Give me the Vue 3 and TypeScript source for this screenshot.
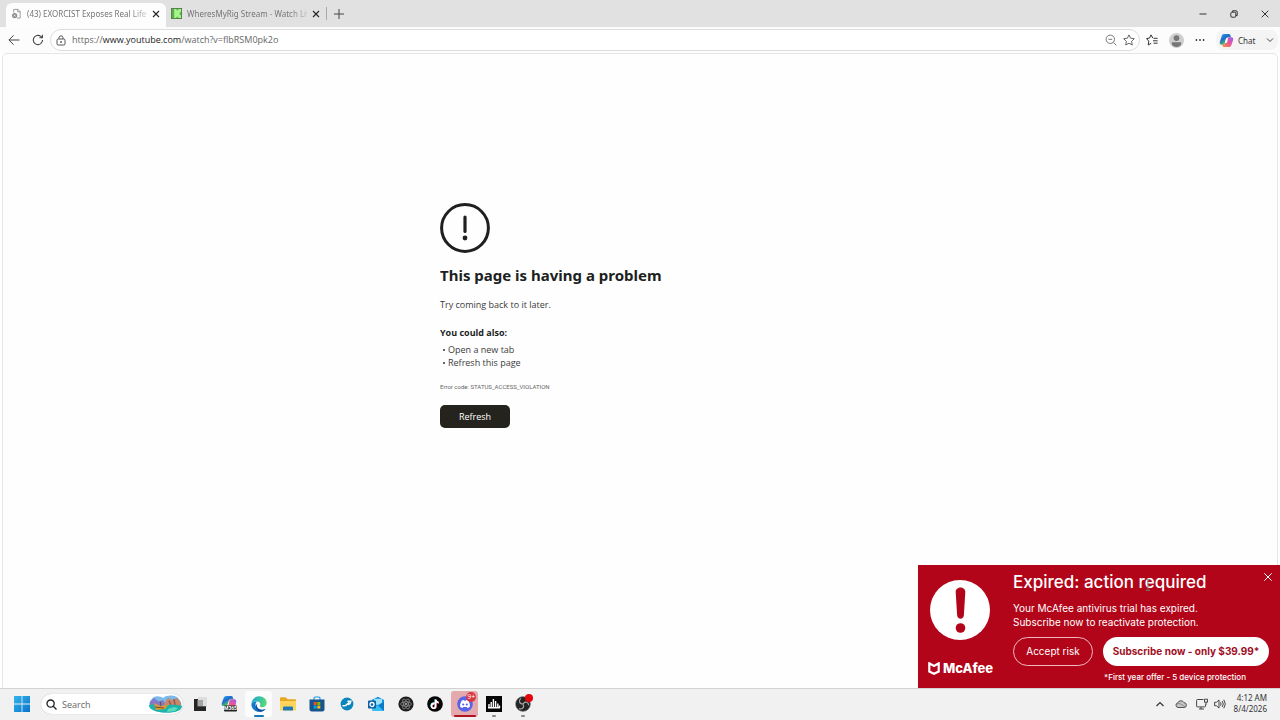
<script setup lang="ts">
import { ref } from 'vue'

interface Tab { title: string; kind: 'page' | 'kick'; active: boolean }

const tabs: Tab[] = [
  { title: '(43) EXORCIST Exposes Real Life D', kind: 'page', active: true },
  { title: 'WheresMyRig Stream - Watch Live', kind: 'kick', active: false },
]
const query = ref('')
const suggestions = ['Open a new tab', 'Refresh this page']
</script>

<template>
  <div class="desktop">
    <header class="tabstrip">
      <div v-for="t in tabs" :key="t.title" class="tab" :class="{ active: t.active }">
        <svg v-if="t.kind === 'page'" class="fav" viewBox="0 0 12 12">
          <path d="M3 5V1.5h4.5L10 4v7H6.5M7.3 1.5V4.2H10" fill="#fff" stroke="#8a8a8a" stroke-width=".9" />
          <circle cx="4" cy="8.3" r="2.9" fill="#8d8d8d" />
          <path d="M3 7.3l2 2m0-2l-2 2" stroke="#fff" stroke-width=".8" />
        </svg>
        <svg v-else class="fav" viewBox="0 0 12 12">
          <rect x=".5" y=".5" width="11" height="11" fill="#a5f58c" stroke="#4b7d42" />
          <path d="M1 1h2.500v10H1zM6 1h2v1.500H6zM9.500 4.500H11v3H9.500zM6 9.500h2V11H6z" fill="#5cae4c" />
        </svg>
        <span class="title">{{ t.title }}</span>
        <button class="plain close" aria-label="Close tab">
          <svg viewBox="0 0 8 8"><path d="M1 1l6 6M7 1L1 7" stroke="#222" stroke-width="1.1" /></svg>
        </button>
      </div>
      <span class="divider"></span>
      <button class="plain newtab" aria-label="New tab">
        <svg viewBox="0 0 10 10"><path d="M5 0v10M0 5h10" stroke="#444" /></svg>
      </button>
      <div class="wincontrols">
        <button class="plain" aria-label="Minimize"><svg viewBox="0 0 8 8"><path d="M.5 4h7" stroke="#333" /></svg></button>
        <button class="plain" aria-label="Restore">
          <svg viewBox="0 0 8 8" fill="none" stroke="#333"><rect x=".8" y="2.2" width="5" height="5" rx="1" /><path d="M2.6 2V.8H6a1.2 1.2 0 0 1 1.2 1.2v3.500H6" /></svg>
        </button>
        <button class="plain" aria-label="Close"><svg viewBox="0 0 8 8"><path d="M.7.7l6.6 6.6M7.3.7L.7 7.3" stroke="#333" /></svg></button>
      </div>
    </header>

    <div class="toolbar">
      <button class="plain nav" aria-label="Back">
        <svg viewBox="0 0 12 12" fill="none" stroke="#444"><path d="M11.5 6H1M5.6 1.3L.9 6l4.7 4.7" /></svg>
      </button>
      <button class="plain nav" aria-label="Reload">
        <svg viewBox="0 0 12 12" fill="none" stroke="#444" stroke-width="1.1"><path d="M10.5 6A4.6 4.6 0 1 1 8.8 2.4L10.3 3.7M10.4.8v3H7.4" /></svg>
      </button>
      <div class="address">
        <svg class="lock" viewBox="0 0 10 11" fill="none" stroke="#555"><rect x="1" y="4" width="8" height="6" rx="1.2" /><path d="M3 4V2.8a2 2 0 0 1 4 0V4" /><circle cx="5" cy="7" r=".5" fill="#555" /></svg>
        <a class="url" href="#">https://<b>www.youtube.com</b>/watch?v=flbRSM0pk2o</a>
        <button class="plain" aria-label="Zoom out">
          <svg viewBox="0 0 12 12" fill="none" stroke="#777"><circle cx="5.3" cy="5.3" r="4.2" /><path d="M3.4 5.3h3.8M8.4 8.4l3 3" /></svg>
        </button>
        <button class="plain" aria-label="Add to favorites">
          <svg viewBox="0 0 12 12" fill="none" stroke="#555" stroke-width=".9" stroke-linejoin="round"><path d="M6 .9l1.6 3.3 3.7.5-2.7 2.6.7 3.7L6 9.2 2.7 11l.7-3.7L.7 4.7l3.7-.5z" /></svg>
        </button>
      </div>
      <button class="plain tool" aria-label="Favorites">
        <svg viewBox="0 0 12 12" fill="none" stroke="#333" stroke-linejoin="round"><path d="M6.8 4.1L5 .9 3.5 4.1.6 4.6l2.2 2.6-.6 3.8 3-1.7M7.6 4.3h4M7 6.8h4.6M7.6 9.2h4" /></svg>
      </button>
      <button class="plain tool avatar" aria-label="Profile">
        <svg viewBox="0 0 15 15"><circle cx="7.5" cy="7.5" r="7.5" fill="#cfcfcf" /><circle cx="7.5" cy="5.1" r="2.9" fill="#777" /><path d="M2.8 9.2h9.4v1.2a4.7 3.6 0 0 1-9.4 0z" fill="#777" /></svg>
      </button>
      <button class="plain tool" aria-label="Settings and more">
        <svg viewBox="0 0 12 12" fill="#333"><circle cx="2.4" cy="6" r=".9" /><circle cx="6" cy="6" r=".9" /><circle cx="9.6" cy="6" r=".9" /></svg>
      </button>
      <button class="chat">
        <svg class="copilot" viewBox="0 0 16 16">
          <path d="M5.6 1h4.8c1.2 0 1.6.8 2 2l.4 1.4H9.6c-1 0-1.5.6-1.8 1.6L6.2 11c-.4 1.2-1 1.6-2 1.6H2.8C.8 12.6.6 11 1 9.4L2.9 3C3.3 1.7 4.2 1 5.6 1z" fill="url(#cpA)" />
          <path d="M10.4 15H5.6c-1.2 0-1.6-.8-2-2l-.3-.7h1c1.4 0 2.2-.6 2.7-2l1.5-4.9c.3-.8.8-1 1.5-1h3.2c2 0 2.2 1.6 1.8 3.2L13.1 13c-.4 1.3-1.3 2-2.7 2z" fill="url(#cpB)" />
          <path d="M7.5 5.600h2.200L8.500 10.300H6.300z" fill="#fff" />
        </svg>
        <span>Chat</span>
        <svg class="chev" viewBox="0 0 8 8" fill="none" stroke="#444"><path d="M1 2.500l3 3 3-3" /></svg>
      </button>
    </div>

    <main class="viewport">
      <section class="problem">
        <svg class="alert" viewBox="0 0 50 50"><circle cx="25" cy="25" r="23.400" fill="none" stroke="#201f1e" stroke-width="3" /><path d="M25 14v14.500" stroke="#201f1e" stroke-width="3.200" stroke-linecap="round" /><circle cx="25" cy="35" r="2.400" fill="#201f1e" /></svg>
        <h1>This page is having a problem</h1>
        <p class="lead">Try coming back to it later.</p>
        <h2>You could also:</h2>
        <ul><li v-for="s in suggestions" :key="s">{{ s }}</li></ul>
        <p class="code">Error code: STATUS_ACCESS_VIOLATION</p>
        <button class="refresh">Refresh</button>
      </section>

      <aside class="toast">
        <div class="brand">
          <svg class="bang" viewBox="0 0 60 60"><circle cx="30" cy="30" r="30" fill="#fff" /><path d="M25.700 12c0-6 9.600-6 9.600 0l-1.400 23c-.3 5-6.500 5-6.800 0z" fill="#b20519" /><circle cx="30.500" cy="48" r="4.800" fill="#b20519" /></svg>
          <div class="logo">
            <svg viewBox="0 0 12 13"><path d="M1.300 1.300v8.200L6 11.700l4.700-2.200V1.300L6 3.900z" fill="none" stroke="#fff" stroke-width="2.200" /></svg>
            <span>McAfee</span>
          </div>
        </div>
        <div class="message">
          <h3>Expired: action required</h3>
          <p>Your McAfee antivirus trial has expired.<br />Subscribe now to reactivate protection.</p>
          <div class="actions">
            <button class="risk">Accept risk</button>
            <button class="buy">Subscribe now - only $39.99*</button>
          </div>
          <small>*First year offer - 5 device protection</small>
        </div>
        <button class="plain dismiss" aria-label="Dismiss"><svg viewBox="0 0 8 8"><path d="M.3.3l7.400 7.400M7.700.3L.3 7.700" stroke="#fff" /></svg></button>
        <svg class="cursor" viewBox="0 0 6 12" fill="none" stroke="#777"><path d="M1 .5h1.500L3 1l.5-.5H5M3 1v10M1 11.500h1.500L3 11l.5.5H5" /></svg>
      </aside>
    </main>

    <footer class="taskbar">
      <button class="plain start" aria-label="Start">
        <svg viewBox="0 0 16 16" fill="url(#win)"><path d="M0 0h7.600v7.600H0zM8.400 0H16v7.600H8.400zM0 8.400h7.600V16H0zM8.400 8.400H16V16H8.400z" /></svg>
      </button>
      <label class="search">
        <svg class="glass" viewBox="0 0 11 11" fill="none" stroke="#222" stroke-width="1.300"><circle cx="4.600" cy="4.600" r="3.600" /><path d="M7.300 7.300l3.200 3.200" /></svg>
        <input v-model="query" type="text" placeholder="Search" aria-label="Search" />
        <svg class="scene" viewBox="0 0 33 18">
          <path d="M2 5C5 0 11 1 14 3c4-4 14-3 16 1 4 5 3 10-2 12-8 3-18 2-24-1C-1 12 0 7 2 5z" fill="#7cb8e8" />
          <path d="M1 7l4-4 5 4 4-2 3 5-8 2-8-1z" fill="#8178c9" />
          <path d="M15 9l4-6 4 2 5-2 4 5v5H15z" fill="#c98767" />
          <path d="M20 6l2 4m3-6l1 6" stroke="#8d5a62" stroke-width="1.500" />
          <path d="M0 10c6-2 9 2 14 1s12-2 19 0c0 3-3 5-7 6-8 1-16 1-22-2-3-1-4-3-4-5z" fill="#1cb5a8" />
          <path d="M5 8l6 3 8-1-3 4-9 1z" fill="#e39a35" /><path d="M11 6l1 5M6 12l9 1" stroke="#74482c" />
          <path d="M19 14l6-2 4 1-3 3-8 1z" fill="#59d9bd" />
        </svg>
      </label>
      <nav class="apps">
        <button class="plain" aria-label="Task view"><svg viewBox="0 0 16 16"><path d="M6 1h9v10H6z" fill="#dedede" /><path d="M2 3h4v8h8v4H2z" fill="#252525" /><path d="M5.500 4H11v6H5.500z" fill="#a5a5a5" /><path d="M5.500 10H14v1H5.500z" fill="#555" /></svg></button>
        <button class="plain" aria-label="Microsoft 365"><svg viewBox="0 0 16 16"><path d="M5.300 0h5c1.200 0 1.600 1 2 2.400l.3.900H9.600C8.500 3.300 8 4 7.700 5L6 10H2.500C.5 10 .4 8.600.8 7.300L2.600 2C3.100.7 4 0 5.300 0z" fill="url(#cpA)" /><path d="M7 11l1.600-6.400c.4-1 .8-1.300 1.600-1.300h2.900c2 0 2.400 1.500 2 3L14 12H7z" fill="url(#cpB)" /><rect x="3" y="9.500" width="13" height="6" rx="1" fill="#222" /><text x="9.500" y="14.300" text-anchor="middle" class="tiny">M365</text></svg></button>
        <button class="plain current" aria-label="Microsoft Edge"><svg viewBox="0 0 16 16"><path d="M.4 8.200C1 6.500 3.500 5.300 6.200 5.600c-2 1-2.500 4.600.4 7 2.500 2 5.700 1.500 8 .3C12.800 15 10.500 15.800 8 15.800 3.600 15.800.2 12 .4 8.200z" fill="#1577c9" /><path d="M6.300 7.500c-1 2-.2 4.300 1.700 5.500 2.300 1.300 4.900.8 6.500 0-1.500 2-4 3-6 2.600-3.300-.6-4.800-5.600-2.200-8.100z" fill="#0c4f9f" /><path d="M.4 8.500C.5 3.500 4 .3 8 .3c4.600 0 7.700 3 7.700 6.700 0 2.600-2 4.200-4.400 4.200-1.900 0-2.900-.9-2.300-1.700.8-1.200.3-3.800-3-4C3.500 5.400 1.200 6.700.4 8.500z" fill="url(#edge)" /></svg><i class="run blue"></i></button>
        <button class="plain" aria-label="File Explorer"><svg viewBox="0 0 16 16"><path d="M0 2.200Q0 1.200 1 1.200h4.600l2 2H15q1 0 1 1V14H0z" fill="#e5a823" /><path d="M0 5h16v8.500q0 1-1 1H1q-1 0-1-1z" fill="#ffd45c" /><path d="M3 14.500v-3q0-1 1-1h8q1 0 1 1v3z" fill="#1c78bd" /></svg></button>
        <button class="plain" aria-label="Microsoft Store"><svg viewBox="0 0 16 16"><path d="M5 4V2.300Q5 1 6.300 1h3.400Q11 1 11 2.300V4" fill="none" stroke="#1b9de2" stroke-width="1.200" /><path d="M.5 3.500h15V13q0 2.500-2.500 2.500H3Q.5 15.500.5 13z" fill="#17548d" /><path d="M4.700 6h3v3h-3z" fill="#f25022" /><path d="M8.300 6h3v3h-3z" fill="#7fba00" /><path d="M4.700 9.600h3v3h-3z" fill="#00a4ef" /><path d="M8.300 9.600h3v3h-3z" fill="#ffb900" /></svg></button>
        <button class="plain" aria-label="Support"><svg viewBox="0 0 16 16"><circle cx="8" cy="8" r="6.400" fill="#0b86bd" /><path d="M4.200 9.800l2.400-.3 3.200-2.600M9 5.200h2.800L11 7.500l-1.500.8" fill="none" stroke="#fff" stroke-width="1.600" stroke-linecap="round" /></svg></button>
        <button class="plain" aria-label="Outlook"><svg viewBox="0 0 16 16"><path d="M3.500 4L10 .8 16 4v9.500q0 1.500-1.500 1.500h-10z" fill="#1490df" /><path d="M6 2.800h8v6H6z" fill="#9be2fa" /><path d="M16 5.500L5 12v3h9.500q1.500 0 1.500-1.500z" fill="#35bef1" /><path d="M16 5.500l-6 4 5.500 5.200q.5-.5.500-1.200z" fill="#087ac8" /><rect y="4.500" width="8" height="8" rx="1" fill="#0a5fa9" /><circle cx="4" cy="8.500" r="2" fill="none" stroke="#fff" stroke-width="1.300" /></svg></button>
        <button class="plain" aria-label="Atom"><svg viewBox="0 0 16 16"><circle cx="8" cy="8" r="7.600" fill="#1e1e1e" /><g fill="none" stroke="#999" stroke-width=".7"><ellipse cx="8" cy="8" rx="5.500" ry="2.200" /><ellipse cx="8" cy="8" rx="5.500" ry="2.200" transform="rotate(60 8 8)" /><ellipse cx="8" cy="8" rx="5.500" ry="2.200" transform="rotate(120 8 8)" /></g><circle cx="8" cy="8" r="1" fill="#bbb" /></svg></button>
        <button class="plain" aria-label="TikTok"><svg viewBox="0 0 16 16"><circle cx="8" cy="8" r="7.800" fill="#050505" /><g fill="none" stroke-width="1.600"><path d="M7.200 7.100c-4-.2-3.900 4.800-1 4.800 1.400 0 2-1 2-2V3.300c.2 1.800 1.400 2.800 3 3" stroke="#25d9dd" /><path d="M8 7.700c-4-.2-3.900 4.800-1 4.800 1.400 0 2-1 2-2V3.900c.2 1.800 1.400 2.800 3 3" stroke="#f03555" /><path d="M7.600 7.400c-4-.2-3.900 4.800-1 4.800 1.400 0 2-1 2-2V3.600c.2 1.800 1.400 2.800 3 3" stroke="#fff" /></g></svg></button>
        <button class="plain discord" aria-label="Discord"><svg viewBox="0 0 16 16"><circle cx="8" cy="8" r="7.800" fill="#5863e8" /><path d="M4.600 4.700q1.300-.6 2.300-.7l.4.700h1.400l.4-.7q1 .1 2.300.7 1.800 3 1.500 6-1.300 1-2.500 1.200l-.6-1H6.200l-.6 1q-1.200-.2-2.500-1.200-.3-3 1.500-6z" fill="#fff" /><circle cx="6.200" cy="8.500" r="1.100" fill="#5863e8" /><circle cx="9.800" cy="8.500" r="1.100" fill="#5863e8" /></svg><em>9+</em><i class="run red"></i></button>
        <button class="plain" aria-label="Mixer"><svg viewBox="0 0 16 16"><path d="M0 0h16v16H0z" fill="#050505" /><path d="M3 8v4M5.200 6v6M7.400 3v9M9.600 5v7M11.800 7.500V12M13.500 9.500V12M2 11.700h12" stroke="#fff" stroke-width="1.400" /></svg><i class="run"></i></button>
        <button class="plain rec" aria-label="OBS Studio"><svg viewBox="0 0 16 16"><circle cx="8" cy="8" r="7.300" fill="#242424" stroke="#555" stroke-width=".7" /><g fill="none" stroke="#aaa" stroke-width="1.100"><path d="M8 8C4 8 3.500 4 6 2.600M8 8c2-3.400 5.800-1.500 5.600 1.300M8 8c2 3.600-1.500 6-3.900 4.500" /></g></svg><b class="dot"></b><i class="run"></i></button>
      </nav>
      <div class="tray">
        <button class="plain" aria-label="Show hidden icons"><svg viewBox="0 0 12 12" fill="none" stroke="#333" stroke-width="1.200"><path d="M2.500 8L6 4.500 9.500 8" /></svg></button>
        <button class="plain cloud" aria-label="OneDrive"><svg viewBox="0 0 12 12"><path d="M3 9.500A2.400 2.400 0 0 1 2.800 4.800 3.400 3.400 0 0 1 9 4.700a2.400 2.400 0 0 1 0 4.800z" fill="#c5c5c5" stroke="#444" stroke-width=".9" /><path d="M1.500 6.500q2-2 4-.6L10.500 9" fill="none" stroke="#777" stroke-width=".7" /></svg></button>
        <button class="plain" aria-label="Network"><svg viewBox="0 0 12 12" fill="none" stroke="#333" stroke-width=".9"><path d="M7.500 1.500H1.500Q.6 1.500.6 2.400V8q0 .9.900.9h7Q9.500 8.900 9.500 8V6.500M3 11h5M5 9v2" /><path d="M8.500 1.200h3v3h-3zM10 4.200V7" /></svg></button>
        <button class="plain" aria-label="Volume"><svg viewBox="0 0 12 12" fill="none" stroke="#333" stroke-width=".9"><path d="M.6 4.300h1.800L5 2v8L2.400 7.700H.6zM6.500 4.300q1.200 1.700 0 3.400M8.200 3q2.200 3 0 6M9.800 1.700q3 4.300 0 8.600" /></svg></button>
        <time class="clock"><span>4:12 AM</span><span>8/4/2026</span></time>
      </div>
    </footer>

    <svg class="defs" aria-hidden="true">
      <defs>
        <linearGradient id="cpA" x1="0" y1="0" x2=".7" y2="1"><stop offset="0" stop-color="#26b6e8" /><stop offset=".45" stop-color="#1f66d1" /><stop offset=".75" stop-color="#43b872" /><stop offset="1" stop-color="#e7cd2c" /></linearGradient>
        <linearGradient id="cpB" x1=".8" y1="0" x2=".2" y2="1"><stop offset="0" stop-color="#a65be8" /><stop offset=".5" stop-color="#e5549f" /><stop offset="1" stop-color="#f7893e" /></linearGradient>
        <linearGradient id="win" x1="0" y1="0" x2="1" y2="1"><stop offset="0" stop-color="#35b5ea" /><stop offset="1" stop-color="#0873cc" /></linearGradient>
        <linearGradient id="edge" x1="0" y1=".3" x2="1" y2=".5"><stop offset="0" stop-color="#1aa5dc" /><stop offset="1" stop-color="#5bdc72" /></linearGradient>
      </defs>
    </svg>
  </div>
</template>

<style>
html, body { margin: 0; background: #fff; }
</style>

<style scoped>
* { box-sizing: border-box; }
.desktop { display: flex; flex-direction: column; min-height: 100vh; overflow: hidden; font-family: "Open Sans", "Noto Sans", sans-serif; font-size: 9px; color: #222; }
.plain { display: flex; align-items: center; justify-content: center; padding: 0; border: 0; background: none; }
svg { display: block; flex: none; }
h1, h2, h3, p, ul { margin: 0; padding: 0; }
.defs { position: absolute; width: 0; height: 0; }

.tabstrip { display: flex; align-items: center; height: 27px; padding-left: 6px; background: #e1e1e1; }
.tab { display: flex; align-items: center; width: 160px; height: 22px; padding: 0 6px 0 5px; gap: 5px; color: #757575; }
.tab.active { align-self: flex-end; height: 24px; padding-bottom: 3px; background: #fdfdfd; border-radius: 6px 6px 0 0; }
.fav { width: 11px; height: 11px; }
.title { flex: 1; min-width: 0; font-family: "Noto Sans", sans-serif; font-size: 8px; white-space: nowrap; mask-image: linear-gradient(90deg, #000 85%, rgba(0, 0, 0, .3)); }
.close svg, .wincontrols svg { width: 8px; height: 8px; }
.divider { width: 1px; height: 13px; background: #aaa; }
.newtab { width: 24px; height: 22px; }
.newtab svg { width: 10px; height: 10px; }
.wincontrols { display: flex; margin-left: auto; }
.wincontrols .plain { width: 31px; height: 27px; }

.toolbar { display: flex; align-items: center; height: 26px; padding: 0 2px; background: #fcfcfc; }
.toolbar svg { width: 12px; height: 12px; }
.nav { width: 24px; height: 24px; }
.address { display: flex; align-items: center; flex: 1; height: 22px; padding: 0 4px 0 5px; gap: 6px; border: 1px solid #ddd; border-radius: 11px; background: #fff; }
.toolbar .lock { width: 10px; height: 11px; }
.url { flex: 1; font-size: 9px; line-height: 12px; color: #666; text-decoration: none; }
.url b { font-weight: 400; color: #222; }
.tool { width: 24px; height: 24px; }
.toolbar .avatar svg { width: 15px; height: 15px; }
.chat { display: flex; align-items: center; width: 62px; height: 20px; margin-left: 4px; padding: 0 4px 0 3px; border: 0; border-radius: 8px; background: #f4f4f4; font: 8px "Noto Sans", sans-serif; color: #333; }
.toolbar .copilot { width: 15px; height: 15px; margin-right: 4px; }
.toolbar .chev { width: 8px; height: 8px; margin-left: auto; }

.viewport { position: relative; flex: 1; margin: 0 2px; padding: 149px 20px 0; border: 1px solid #e6e6e6; border-bottom: 0; border-radius: 5px 5px 0 0; background: #fefefe; }
.problem { max-width: 400px; margin: 0 auto; color: #201f1e; }
.alert { width: 50px; height: 50px; }
h1 { margin-top: 10px; font-family: "Noto Sans", sans-serif; font-size: 15px; line-height: 24px; font-weight: 700; }
.lead { margin-top: 10px; font-size: 9px; line-height: 16px; color: #3b3b3b; }
h2 { margin-top: 12px; font-size: 9px; line-height: 16px; font-weight: 700; }
ul { margin-top: 2px; list-style: none; font-size: 9px; line-height: 13px; color: #3b3b3b; }
li { display: flex; align-items: center; gap: 3px; padding-left: 3px; }
li::before { content: ""; width: 2px; height: 2px; border-radius: 1px; background: #333; }
.code { margin-top: 13px; font-family: Roboto, sans-serif; font-size: 6px; line-height: 10px; color: #666; }
.refresh { display: block; width: 70px; height: 23px; margin-top: 13px; padding: 0 0 1px; border: 0; border-radius: 5px; background: #25231d; color: #fff; font: 9px "Open Sans", sans-serif; }

.toast { position: absolute; right: -3px; bottom: 0; display: flex; width: 362px; height: 123px; background: #b20519; color: #fff; font-family: Inter, "Open Sans", sans-serif; }
.brand { width: 95px; padding: 15px 0 0 12px; }
.bang { width: 60px; height: 60px; }
.logo { display: flex; align-items: center; gap: 3px; height: 16px; margin: 20px 0 0 -2px; font-family: Inter, sans-serif; font-size: 13px; font-weight: 800; }
.logo svg { width: 12px; height: 13px; }
.message { flex: 1; padding: 6px 11px 0 0; }
h3 { font-size: 17px; line-height: 22px; font-weight: 500; }
.message p { margin-top: 8px; font-size: 10px; line-height: 14px; white-space: nowrap; }
.actions { display: flex; gap: 10px; margin-top: 8px; }
.actions button { height: 29px; padding: 0 0 1px; border-radius: 15px; font-family: inherit; font-size: 10px; white-space: nowrap; }
.actions .risk { width: 80px; border: 1px solid #f0b8bf; background: none; color: #fff; }
.actions .buy { flex: 1; border: 0; background: #fff; color: #a00f25; font-weight: 700; }
small { display: block; margin: 4px 0 0 91px; font-size: 8px; line-height: 14px; font-weight: 500; white-space: nowrap; }
.dismiss { position: absolute; top: 7px; right: 7px; width: 10px; height: 10px; }
.dismiss svg { width: 8px; height: 8px; }
.cursor { position: absolute; left: 227px; top: 14px; width: 6px; height: 12px; }

.taskbar { display: flex; align-items: center; height: 32px; padding-bottom: 1px; border-top: 1px solid #d2d2d2; background: #f1f1f1; }
.start { width: 41px; height: 30px; padding-left: 2px; }
.start svg { width: 16px; height: 16px; }
.search { display: flex; align-items: center; width: 142px; height: 20px; padding: 0 1px 0 5px; border-radius: 10px; background: #fff; box-shadow: 0 0 1px #aaa; }
.glass { width: 11px; height: 11px; }
.search input { flex: 1; min-width: 0; margin: 0 0 0 5px; padding: 0; border: 0; outline: 0; background: none; font: 9px "Open Sans", sans-serif; color: #333; }
.search input::placeholder { color: #666; opacity: 1; }
.scene { width: 33px; height: 18px; }
.apps { display: flex; width: 353px; margin-left: 2px; }
.apps .plain { position: relative; flex: 1; height: 30px; }
.apps svg { width: 16px; height: 16px; }
.tiny { font: 700 5px Roboto, sans-serif; fill: #fff; }
.current::before, .discord::before { content: ""; position: absolute; inset: 2px 1px; border-radius: 3px; background: #fcfcfc; }
.discord::before { background: #e4a9ac; }
.current svg, .discord svg { position: relative; }
.run { position: absolute; bottom: 2px; width: 4px; height: 2px; border-radius: 1px; background: #888; }
.run.blue { width: 10px; background: #1279bd; }
.run.red { width: 22px; background: #b01320; }
.discord em { position: absolute; top: 3px; right: 3px; width: 10px; height: 10px; border-radius: 5px; background: #d83643; color: #fff; font: 7px/10px "Open Sans", sans-serif; text-align: center; }
.dot { position: absolute; top: 5px; right: 5px; width: 8px; height: 8px; border-radius: 4px; background: #e6040b; }
.tray { display: flex; align-items: center; gap: 6px; margin-left: auto; padding-right: 13px; }
.tray svg { width: 12px; height: 12px; }
.tray .cloud { margin: 0 3px; }
.clock { display: flex; flex-direction: column; align-items: flex-end; width: 35px; padding-bottom: 2px; font-family: "Noto Sans", sans-serif; font-size: 8px; line-height: 11px; color: #333; white-space: nowrap; }
</style>
